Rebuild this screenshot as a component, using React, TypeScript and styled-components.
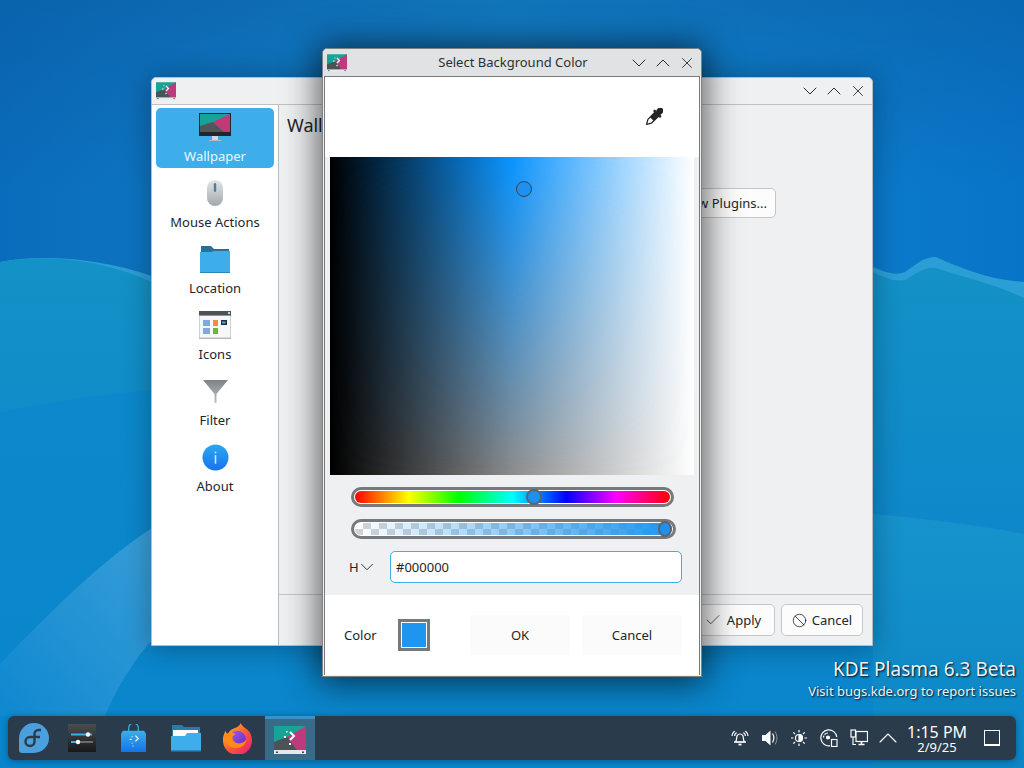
import React from 'react';
import styled, { createGlobalStyle } from 'styled-components';
import { Check, Ban, ChevronDown, ChevronUp, X } from 'lucide-react';

const Global = createGlobalStyle`
  html, body { margin: 0; padding: 0; width: 1024px; height: 768px; overflow: hidden; }
  body { font-family: "Noto Sans", "Open Sans", sans-serif; font-size: 13px; color: #232629; }
  * { box-sizing: border-box; }
`;

const Desktop = styled.div`
  position: relative;
  width: 1024px;
  height: 768px;
  overflow: hidden;
  background: #0c76c0;
`;
const WallpaperArt = styled.svg`
  position: absolute;
  inset: 0;
`;

const WindowFrame = styled.div<{ $x: number; $y: number; $w: number; $h: number; $shadow?: boolean }>`
  position: absolute;
  left: ${p => p.$x}px;
  top: ${p => p.$y}px;
  width: ${p => p.$w}px;
  height: ${p => p.$h}px;
  border-radius: 5px 5px 0 0;
  display: flex;
  flex-direction: column;
  background: #eff0f1;
  box-shadow: ${p => (p.$shadow ? '0 2px 34px 4px rgba(0,0,0,.62)' : '0 2px 28px 2px rgba(0,0,0,.28)')};
  border: 1px solid ${p => (p.$shadow ? '#7f8285' : '#b9bcbf')};
`;
const TitleBar = styled.div<{ $h: number; $bg: string; $pr: number }>`
  height: ${p => p.$h}px;
  flex: none;
  display: flex;
  align-items: center;
  padding: 0 ${p => p.$pr}px 0 4px;
  background: ${p => p.$bg};
  border-radius: 5px 5px 0 0;
`;
const TitleText = styled.div`
  flex: 1;
  text-align: center;
  font-size: 13px;
  color: #2c3034;
  padding-left: 52px;
  margin-bottom: 2px;
`;
const TitleIcons = styled.div`
  display: flex;
  color: #2a2e32;
  margin-left: auto;
`;
const ControlButton = styled.div`
  width: 24px;
  height: 24px;
  display: flex;
  align-items: center;
  justify-content: center;
`;

const ConfigBody = styled.div`
  flex: 1;
  display: flex;
  border-top: 1px solid #bfc2c5;
  min-height: 0;
`;
const Sidebar = styled.div`
  width: 127px;
  flex: none;
  background: #fff;
  border-right: 1px solid #b9bcbf;
  padding: 3px 4px 0 4px;
  display: flex;
  flex-direction: column;
`;
const SideItem = styled.div<{ $active?: boolean }>`
  height: 60px;
  margin-bottom: 6px;
  flex: none;
  border-radius: 5px;
  display: flex;
  flex-direction: column;
  align-items: center;
  background: ${p => (p.$active ? '#3daee9' : 'transparent')};
  color: ${p => (p.$active ? '#eaf6ff' : '#232629')};
`;
const SideIconBox = styled.div`
  height: 36px;
  width: 36px;
  display: flex;
  align-items: center;
  justify-content: center;
  margin-top: 1px;
`;
const SideLabel = styled.div`
  font-size: 13px;
  line-height: 18px;
  margin-top: 2px;
`;
const ConfigMain = styled.div`
  flex: 1;
  display: flex;
  flex-direction: column;
  min-width: 0;
`;
const ConfigContent = styled.div`
  flex: 1;
  padding: 8px 8px 0 8px;
  display: flex;
  flex-direction: column;
`;
const PageTitle = styled.div`
  font-size: 18px;
  line-height: 24px;
  color: #232629;
`;
const PluginRow = styled.div`
  margin-top: 51px;
  display: flex;
  justify-content: flex-end;
  padding-right: 88px;
`;
const DialogButton = styled.div<{ $w: number; $h?: number; $pr?: number }>`
  width: ${p => p.$w}px;
  height: ${p => p.$h ?? 32}px;
  background: #fcfcfc;
  border: 1px solid #c4c7ca;
  border-radius: 5px;
  display: flex;
  align-items: center;
  justify-content: center;
  gap: 5px;
  padding-right: ${p => p.$pr ?? 0}px;
  font-size: 13px;
  color: #232629;
`;
const PluginButton = styled(DialogButton)`
  justify-content: flex-end;
  padding-right: 8px;
`;
const ConfigFooter = styled.div`
  height: 51px;
  flex: none;
  border-top: 1px solid #c4c7ca;
  display: flex;
  justify-content: flex-end;
  align-items: center;
  gap: 6px;
  padding: 0 9px 0 0;
`;

const DialogBody = styled.div`
  flex: 1;
  background: #fff;
  margin: 0 1px 1px;
  border: 1px solid #77797c;
  border-bottom: none;
  display: flex;
  flex-direction: column;
  min-height: 0;
`;
const PreviewRow = styled.div`
  height: 80px;
  flex: none;
  display: flex;
  align-items: center;
  justify-content: flex-end;
  padding: 0 36px 0 0;
`;
const PickerArea = styled.div`
  height: 438px;
  flex: none;
  background: #eff0f1;
  display: flex;
  flex-direction: column;
  padding: 0 5px;
`;
const ColorSquare = styled.div`
  position: relative;
  height: 318px;
  background: linear-gradient(to right, #000 0%, #8c8c8c 50%, #fff 100%);
  &::before {
    content: '';
    position: absolute;
    inset: 0;
    background: linear-gradient(to right, #000 0%, #0a94ff 50%, #fff 100%);
    -webkit-mask-image: linear-gradient(to bottom, #000, transparent);
    mask-image: linear-gradient(to bottom, #000, transparent);
  }
`;
const Cursor = styled.div`
  position: absolute;
  left: 186px;
  top: 24px;
  width: 16px;
  height: 16px;
  border-radius: 50%;
  border: 1px solid #3c4147;
  background: #1e90f0;
`;
const SliderBox = styled.div`
  padding: 12px 0 0 21px;
  display: flex;
  flex-direction: column;
  gap: 12px;
`;
const Track = styled.div<{ $w: number }>`
  position: relative;
  width: ${p => p.$w}px;
  height: 20px;
  border: 3px solid #75787c;
  border-radius: 10px;
  background: #fff;
  padding: 1px;
`;
const HueFill = styled.div`
  height: 100%;
  border-radius: 7px;
  background: linear-gradient(to right, #f00 0%, #ff0 17%, #0f0 33%, #0ff 50%, #00f 67%, #f0f 83%, #f00 100%);
`;
const AlphaFill = styled.div`
  height: 100%;
  border-radius: 7px;
  background:
    linear-gradient(to right, rgba(30,144,240,0), #1e96f0),
    repeating-conic-gradient(#d2d4d6 0 25%, #fff 0 50%) 0 0 / 16px 12px;
`;
const Thumb = styled.div<{ $left: number; $narrow?: boolean }>`
  position: absolute;
  left: ${p => p.$left}px;
  top: -1px;
  width: ${p => (p.$narrow ? 14 : 16)}px;
  height: 16px;
  border-radius: 50%;
  background: #1e90f0;
  border: 2px solid #5b6570;
`;
const InputRow = styled.div`
  display: flex;
  align-items: center;
  padding: 12px 12px 0 19px;
`;
const ModeLabel = styled.div`
  width: 41px;
  flex: none;
  display: flex;
  align-items: center;
  font-size: 13px;
`;
const ModeChevron = styled(ChevronDown)`
  margin-left: -3px;
  flex: none;
`;
const HexInput = styled.div`
  flex: 1;
  height: 32px;
  background: #fff;
  border: 1px solid #3daee9;
  border-radius: 5px;
  display: flex;
  align-items: center;
  padding-left: 5px;
  font-size: 13px;
`;
const ActionRow = styled.div`
  flex: 1;
  display: flex;
  align-items: center;
  padding: 0 17px 0 19px;
`;
const ColorLabel = styled.div`
  width: 54px;
  font-size: 13px;
`;
const Swatch = styled.div`
  width: 32px;
  height: 32px;
  border: 3px solid #75787c;
  background: #1e96f0;
  box-shadow: inset 0 0 0 1px #fff;
`;
const FlatButton = styled.div`
  width: 100px;
  height: 40px;
  background: #fbfbfb;
  display: flex;
  align-items: center;
  justify-content: center;
  font-size: 13px;
`;
const ActionButtons = styled.div`
  margin-left: auto;
  display: flex;
  gap: 12px;
`;

const Watermark = styled.div`
  position: absolute;
  right: 8px;
  top: 657px;
  text-align: right;
  color: #eef2f5;
  text-shadow: 1px 1px 2px rgba(0,0,0,.95);
`;
const WatermarkTitle = styled.div`
  font-size: 19px;
  line-height: 24px;
`;
const WatermarkSub = styled.div`
  font-size: 13px;
  line-height: 18px;
  margin-top: 1px;
`;

const Panel = styled.div`
  position: absolute;
  left: 8px;
  top: 716px;
  width: 1008px;
  height: 44px;
  border-radius: 6px;
  background: #2a3b4b;
  box-shadow: 0 1px 6px rgba(0,0,0,.35);
  display: flex;
  align-items: stretch;
  color: #fcfcfc;
`;
const TaskList = styled.div`
  display: flex;
`;
const TaskItem = styled.div<{ $active?: boolean; $w: number }>`
  width: ${p => p.$w}px;
  display: flex;
  align-items: center;
  justify-content: center;
  background: ${p => (p.$active ? '#386b88' : 'transparent')};
  border-top: ${p => (p.$active ? '3px solid #3d91c4' : 'none')};
`;
const Tray = styled.div`
  margin-left: auto;
  display: flex;
  align-items: center;
  padding-right: 16px;
`;
const TrayIcon = styled.div`
  width: 29.6px;
  display: flex;
  justify-content: center;
  align-items: center;
  svg { flex: none; }
`;
const Clock = styled.div`
  width: 60px;
  margin-left: 4px;
  padding-top: 2px;
  text-align: center;
  display: flex;
  flex-direction: column;
  white-space: nowrap;
`;
const ClockTime = styled.div`
  font-size: 16px;
  line-height: 16px;
`;
const ClockDate = styled.div`
  font-size: 13px;
  line-height: 14px;
`;
const ShowDesktop = styled.div`
  margin-left: 17px;
  width: 16px;
  height: 16px;
  border: 1.5px solid #fcfcfc;
  border-bottom-width: 2.5px;
`;

const Wallpaper = () => (
  <WallpaperArt width="1024" height="768" viewBox="0 0 1024 768">
    <defs>
      <linearGradient id="sky" x1="0" y1="0" x2="1" y2="0">
        <stop offset="0" stopColor="#0a6cbc" />
        <stop offset=".5" stopColor="#1488d0" />
        <stop offset="1" stopColor="#0874c8" />
      </linearGradient>
      <linearGradient id="skyTop" x1="0" y1="0" x2="0" y2="1">
        <stop offset="0" stopColor="#0b4f8e" stopOpacity=".35" />
        <stop offset="1" stopColor="#0b4f8e" stopOpacity="0" />
      </linearGradient>
      <linearGradient id="waveA" x1="0" y1="0" x2="0" y2="1">
        <stop offset="0" stopColor="#1392c6" />
        <stop offset="1" stopColor="#0a7fce" />
      </linearGradient>
      <linearGradient id="waveB" x1="0" y1="0" x2="0" y2="1">
        <stop offset="0" stopColor="#0c89cc" />
        <stop offset="1" stopColor="#0985cc" />
      </linearGradient>
      <linearGradient id="waveC" x1="0" y1="0" x2="0" y2="1">
        <stop offset="0" stopColor="#1693cc" />
        <stop offset="1" stopColor="#0c86c6" />
      </linearGradient>
      <linearGradient id="waveD" x1="1" y1="0" x2="0" y2="1">
        <stop offset="0" stopColor="#389ed8" />
        <stop offset="1" stopColor="#0f88d0" />
      </linearGradient>
    </defs>
    <rect width="1024" height="768" fill="url(#sky)" />
    <rect width="1024" height="190" fill="url(#skyTop)" />
    <path d="M0 262 C40 254 100 258 152 276 L873 267 C885 272 895 276 905 272 C915 265 925 256 936 257 C960 268 990 280 1024 282 V768 H0 Z" fill="#2c9ed6" />
    <path d="M0 262 C40 254 100 258 152 282 L873 272 C885 278 895 282 905 280 C915 274 925 266 936 268 C960 276 995 284 1024 298 V768 H0 Z" fill="url(#waveA)" />
    <path d="M0 412 C50 402 100 394 152 390 L873 500 V768 H0 Z" fill="url(#waveB)" />
    <path d="M873 514 C920 518 970 524 1024 534 V768 H873 Z" fill="url(#waveC)" />
    <path d="M0 664 C50 612 100 562 152 528 V640 C130 665 115 692 105 716 H0 Z" fill="url(#waveD)" />
  </WallpaperArt>
);

const PlasmaIcon = ({ w, h }: { w: number; h: number }) => (
  <svg width={w} height={h} viewBox="0 0 32 28">
    <rect width="32" height="28" fill="#e6e7e9" />
    <path d="M0 0H32V24H0Z" fill="#17a396" />
    <path d="M32 0V24H23L13 11Z" fill="#bd3a7c" />
    <path d="M0 24V16L13 11 23 24Z" fill="#4c5256" />
    <path d="M16 6l4 4-4 4" fill="none" stroke="#fff" strokeWidth="2" />
    <rect x="15" y="17" width="2" height="2" fill="#fff" />
    <rect x="10" y="10" width="2" height="2" fill="#fff" />
    <rect x="12" y="5" width="1.500" height="1.500" fill="#fff" />
    <rect x="2" y="25.500" width="2" height="1.500" fill="#444" />
    <rect x="28" y="25.500" width="2" height="1.500" fill="#444" />
  </svg>
);

const MonitorIcon = () => (
  <svg width="32" height="28" viewBox="0 0 32 28">
    <rect x="0" y="0" width="32" height="23" fill="#232629" />
    <path d="M1 1H31V19H1Z" fill="#17a396" />
    <path d="M31 1V19H25L14 9Z" fill="#c03a78" />
    <path d="M1 19V13L14 9 25 19Z" fill="#505659" />
    <rect x="13" y="23" width="6" height="4" fill="#d6d9dc" />
    <rect x="10" y="27" width="12" height="1" fill="#b5b9bd" />
  </svg>
);
const MouseIcon = () => (
  <svg width="16" height="26" viewBox="0 0 16 26">
    <defs><linearGradient id="m" x1="0" y1="0" x2="0" y2="1"><stop offset="0" stopColor="#e4e6e8" /><stop offset="1" stopColor="#a2a8ae" /></linearGradient></defs>
    <rect x="0" y="0" width="16" height="26" rx="8" fill="url(#m)" />
    <rect x="6.800" y="3" width="2.400" height="9" rx="1.200" fill="#4f7f9d" />
  </svg>
);
const FolderIcon = () => (
  <svg width="30" height="27" viewBox="0 0 30 27">
    <path d="M1 0H11L14 3H29V10H1Z" fill="#2a6f9c" />
    <path d="M0 6H11L14 5H30V27H0Z" fill="#3daee9" />
    <rect y="26" width="30" height="1" fill="#2a86bb" />
  </svg>
);
const IconsIcon = () => (
  <svg width="32" height="28" viewBox="0 0 32 28">
    <rect width="32" height="28" fill="#f5f7f8" />
    <rect width="32" height="4" fill="#4d5257" />
    <rect y="4" width="32" height="1" fill="#3daee9" />
    <rect x="29" y="1" width="2" height="2" fill="#cfd3d6" />
    <rect y="26.600" width="32" height="1.400" fill="#b4b9bd" />
    <rect y="5" width=".8" height="22" fill="#c4c8cb" />
    <rect x="31.200" y="5" width=".8" height="22" fill="#c4c8cb" />
    <path d="M4 9H11V15H4ZM4 17H11V23H4Z" fill="#7fa9dc" />
    <path d="M14 9H19V15H14Z" fill="#f58b3b" />
    <path d="M14 17H19V23H14Z" fill="#6cb82c" />
    <rect x="22" y="9" width="6" height="5" fill="#2a2e32" />
    <rect x="23" y="10.500" width="3.500" height="2" fill="#3daee9" />
  </svg>
);
const FunnelIcon = () => (
  <svg width="25" height="23" viewBox="0 0 25 23">
    <defs><linearGradient id="f" x1="0" y1="0" x2="0" y2="1"><stop offset="0" stopColor="#7f8386" /><stop offset="1" stopColor="#bcc0c3" /></linearGradient></defs>
    <path d="M0 0H25L13.500 14V23H11.500V14Z" fill="url(#f)" />
  </svg>
);
const InfoIcon = () => (
  <svg width="27" height="27" viewBox="0 0 28 28">
    <defs><linearGradient id="i" x1="0" y1="0" x2="0" y2="1"><stop offset="0" stopColor="#2aa8f2" /><stop offset="1" stopColor="#1b72ea" /></linearGradient></defs>
    <circle cx="14" cy="14" r="13.500" fill="url(#i)" />
    <rect x="13.200" y="11.500" width="1.600" height="9" fill="#cfe7fa" />
    <rect x="13.200" y="8" width="1.600" height="1.600" fill="#cfe7fa" />
  </svg>
);
const Eyedropper = () => (
  <svg width="18" height="18" viewBox="0 0 18 18">
    <g transform="rotate(45 9 9)">
      <rect x="5.800" y="-3" width="6.400" height="7" rx="2.600" fill="#232629" />
      <rect x="4" y="3" width="10" height="2.600" rx="1" fill="#232629" />
      <path d="M6.400 5V15L9 19.500 11.600 15V5Z" fill="#fff" stroke="#232629" strokeWidth="1.300" strokeLinejoin="round" />
      <rect x="6.400" y="5" width="5.200" height="7" fill="#232629" />
    </g>
  </svg>
);

const FedoraIcon = () => (
  <svg width="30" height="30" viewBox="0 0 30 30">
    <path d="M15 0a15 15 0 0 1 0 30H3a3 3 0 0 1-3-3V15A15 15 0 0 1 15 0Z" fill="#4b9fdc" />
    <path d="M22 7h-2.500a4 4 0 0 0-4 4v7.500A4.500 4.500 0 0 1 11 23a4.500 4.500 0 0 1 0-9h10" fill="none" stroke="#2a3b4b" strokeWidth="2.400" />
  </svg>
);
const MixerIcon = () => (
  <svg width="28" height="28" viewBox="0 0 28 28">
    <defs><linearGradient id="mx" x1="0" y1="0" x2="0" y2="1"><stop offset="0" stopColor="#4a4d50" /><stop offset="1" stopColor="#17181a" /></linearGradient></defs>
    <rect width="28" height="28" fill="url(#mx)" />
    <rect x="3" y="9.500" width="21" height="2" fill="#3daee9" />
    <rect x="3" y="17" width="9" height="2" fill="#3daee9" />
    <rect x="12" y="17" width="13" height="2" fill="#6a6d70" />
    <circle cx="20" cy="10.500" r="2.200" fill="#fff" />
    <circle cx="10" cy="18" r="2.200" fill="#fff" />
  </svg>
);
const BagIcon = () => (
  <svg width="25" height="28" viewBox="0 0 26 29">
    <defs><linearGradient id="bg" x1="0" y1="0" x2="0" y2="1"><stop offset="0" stopColor="#3daee9" /><stop offset="1" stopColor="#1473e6" /></linearGradient></defs>
    <path d="M8 8V4a5 5 0 0 1 10 0v4" fill="none" stroke="#3daee9" strokeWidth="1.300" />
    <path d="M2 7H24L26 10V29H0V10Z" fill="url(#bg)" />
    <path d="M15 12l3 3-3 3" fill="none" stroke="#fff" strokeWidth="1.200" />
    <path d="M9 16h2M11 13h1M11 20h1M12 23h1" stroke="#d5ecfb" strokeWidth="1.200" />
  </svg>
);
const FilesIcon = () => (
  <svg width="30" height="28" viewBox="0 0 30 28">
    <path d="M1 1H11L13 3H29V12H1Z" fill="#2a7ba8" />
    <path d="M2 6H27V12H2Z" fill="#fcfcfc" />
    <path d="M0 12 14 12 16 9H30V27H0Z" fill="#3daee9" />
    <rect y="26" width="30" height="1.500" fill="#2a86bb" />
  </svg>
);
const FirefoxIcon = () => (
  <svg width="31" height="31" viewBox="0 0 32 32">
    <defs>
      <linearGradient id="ff" x1="0" y1="0" x2="1" y2="1"><stop offset="0" stopColor="#ffc326" /><stop offset=".55" stopColor="#ff5634" /><stop offset="1" stopColor="#e31587" /></linearGradient>
      <linearGradient id="ffp" x1="0" y1="0" x2="1" y2="1"><stop offset="0" stopColor="#a55cf0" /><stop offset="1" stopColor="#5a2cc0" /></linearGradient>
    </defs>
    <path d="M19 0c2 3 3 4 6 6 4 3 6 7 6 12a15 15 0 0 1-30 0C1 13 3 9 4 8c0 2 1 3 2 4 1-4 5-6 8-7 2-1 5-3 5-5Z" fill="url(#ff)" />
    <circle cx="16" cy="16.500" r="8.500" fill="url(#ffp)" />
    <path d="M2 13c3-3 8-4 12-2l-3 3c-1 4 3 8 8 7 3-1 5-2 6-4 0 5-5 9-11 9-7 0-12-6-12-13Z" fill="#ff8a16" />
  </svg>
);

const Alarm = () => (
  <svg width="18" height="18" viewBox="0 0 18 18" fill="none" stroke="#fcfcfc" strokeWidth="1.200">
    <path d="M4.500 13c1.500-1.500.8-4.500 1.600-6.200C6.700 5.500 7.800 5 9 5s2.300.5 2.900 1.800c.8 1.700.1 4.700 1.600 6.200Z" />
    <path d="M3 13h12" strokeWidth="1.400" />
    <path d="M7.500 15.500h3" strokeWidth="1.800" />
    <path d="M3.500 7c.2-1.500 1-2.700 2-3.500M1 7c.2-2 1.200-3.800 2.600-5M14.500 7c-.2-1.500-1-2.700-2-3.500M17 7c-.2-2-1.200-3.800-2.600-5" />
  </svg>
);
const Speaker = () => (
  <svg width="18" height="18" viewBox="0 0 18 18">
    <path d="M1 6h3.500L9.500 1.500v15L4.500 12H1Z" fill="#fcfcfc" />
    <path d="M11.500 4.500c1.700 2.800 1.700 6.200 0 9" fill="none" stroke="#fcfcfc" strokeWidth="1.200" />
    <path d="M14 2.500c2.600 3.800 2.600 9.200 0 13" fill="none" stroke="#8a949c" strokeWidth="1" />
  </svg>
);
const Brightness = () => (
  <svg width="18" height="18" viewBox="0 0 18 18" fill="none" stroke="#fcfcfc" strokeWidth="1.200">
    <circle cx="9" cy="9" r="3.500" />
    <path d="M9 5.500a3.500 3.500 0 0 1 0 7Z" fill="#fcfcfc" />
    <path d="M9 1v2.500M9 14.500V17M1 9h2.500M14.500 9H17M3.300 3.300 5 5M13 13l1.700 1.700M3.300 14.700 5 13M13 5l1.700-1.700" />
  </svg>
);
const DiskNet = () => (
  <svg width="18" height="18" viewBox="0 0 18 18" fill="none" stroke="#fcfcfc" strokeWidth="1.200">
    <path d="M10 16.800A8 8 0 1 1 16.800 8" />
    <circle cx="8" cy="8.500" r="1.500" fill="#fcfcfc" />
    <path d="M4.500 5.500C5.500 4.500 7 4 8 4M3.500 8.500c0-1 .2-1.500.6-2" />
    <rect x="11.500" y="10.500" width="5.500" height="7" fill="#2a3b4b" />
  </svg>
);
const Network = () => (
  <svg width="18" height="18" viewBox="0 0 18 18" fill="none" stroke="#fcfcfc" strokeWidth="1.200">
    <rect x="1" y="1" width="4.500" height="7" />
    <path d="M3 8v7.500H6" />
    <rect x="6" y="2.500" width="11.500" height="10" />
    <path d="M11.500 12.500V15M8.500 15.500h6" strokeWidth="1.600" />
  </svg>
);

const sideItems: { label: string; icon: React.ReactNode; active?: boolean }[] = [
  { label: 'Wallpaper', icon: <MonitorIcon />, active: true },
  { label: 'Mouse Actions', icon: <MouseIcon /> },
  { label: 'Location', icon: <FolderIcon /> },
  { label: 'Icons', icon: <IconsIcon /> },
  { label: 'Filter', icon: <FunnelIcon /> },
  { label: 'About', icon: <InfoIcon /> },
];

const WindowControls = () => (
  <TitleIcons>
    <ControlButton><ChevronDown size={24} strokeWidth={1} /></ControlButton>
    <ControlButton><ChevronUp size={24} strokeWidth={1} /></ControlButton>
    <ControlButton><X size={18} strokeWidth={1.200} /></ControlButton>
  </TitleIcons>
);

export default function App() {
  return (
    <Desktop>
      <Global />
      <Wallpaper />

      <WindowFrame $x={151} $y={77} $w={722} $h={569}>
        <TitleBar $h={26} $bg="#eff0f1" $pr={2}>
          <PlasmaIcon w={20} h={18} />
          <WindowControls />
        </TitleBar>
        <ConfigBody>
          <Sidebar>
            {sideItems.map(s => (
              <SideItem key={s.label} $active={s.active}>
                <SideIconBox>{s.icon}</SideIconBox>
                <SideLabel>{s.label}</SideLabel>
              </SideItem>
            ))}
          </Sidebar>
          <ConfigMain>
            <ConfigContent>
              <PageTitle>Wallpaper</PageTitle>
              <PluginRow>
                <PluginButton $w={160} $h={30}>Get New Plugins...</PluginButton>
              </PluginRow>
            </ConfigContent>
            <ConfigFooter>
              <DialogButton $w={77} $pr={8}><Check size={18} strokeWidth={1} />Apply</DialogButton>
              <DialogButton $w={82}><Ban size={15} strokeWidth={1.300} />Cancel</DialogButton>
            </ConfigFooter>
          </ConfigMain>
        </ConfigBody>
      </WindowFrame>

      <WindowFrame $x={322} $y={48} $w={380} $h={629} $shadow>
        <TitleBar $h={27} $bg="#e1e2e4" $pr={2}>
          <PlasmaIcon w={20} h={18} />
          <TitleText>Select Background Color</TitleText>
          <WindowControls />
        </TitleBar>
        <DialogBody>
          <PreviewRow><Eyedropper /></PreviewRow>
          <PickerArea>
            <ColorSquare><Cursor /></ColorSquare>
            <SliderBox>
              <Track $w={323}>
                <HueFill />
                <Thumb $left={172} />
              </Track>
              <Track $w={325}>
                <AlphaFill />
                <Thumb $left={304} $narrow />
              </Track>
            </SliderBox>
            <InputRow>
              <ModeLabel>H<ModeChevron size={22} strokeWidth={1} /></ModeLabel>
              <HexInput>#000000</HexInput>
            </InputRow>
          </PickerArea>
          <ActionRow>
            <ColorLabel>Color</ColorLabel>
            <Swatch />
            <ActionButtons>
              <FlatButton>OK</FlatButton>
              <FlatButton>Cancel</FlatButton>
            </ActionButtons>
          </ActionRow>
        </DialogBody>
      </WindowFrame>

      <Watermark>
        <WatermarkTitle>KDE Plasma 6.3 Beta</WatermarkTitle>
        <WatermarkSub>Visit bugs.kde.org to report issues</WatermarkSub>
      </Watermark>

      <Panel>
        <TaskList>
          <TaskItem $w={52}><FedoraIcon /></TaskItem>
          <TaskItem $w={44}><MixerIcon /></TaskItem>
          <TaskItem $w={58}><BagIcon /></TaskItem>
          <TaskItem $w={48}><FilesIcon /></TaskItem>
          <TaskItem $w={55}><FirefoxIcon /></TaskItem>
          <TaskItem $w={50} $active><PlasmaIcon w={32} h={28} /></TaskItem>
        </TaskList>
        <Tray>
          <TrayIcon><Alarm /></TrayIcon>
          <TrayIcon><Speaker /></TrayIcon>
          <TrayIcon><Brightness /></TrayIcon>
          <TrayIcon><DiskNet /></TrayIcon>
          <TrayIcon><Network /></TrayIcon>
          <TrayIcon><ChevronUp size={32} strokeWidth={.8} /></TrayIcon>
          <Clock>
            <ClockTime>1:15 PM</ClockTime>
            <ClockDate>2/9/25</ClockDate>
          </Clock>
          <ShowDesktop />
        </Tray>
      </Panel>
    </Desktop>
  );
}
